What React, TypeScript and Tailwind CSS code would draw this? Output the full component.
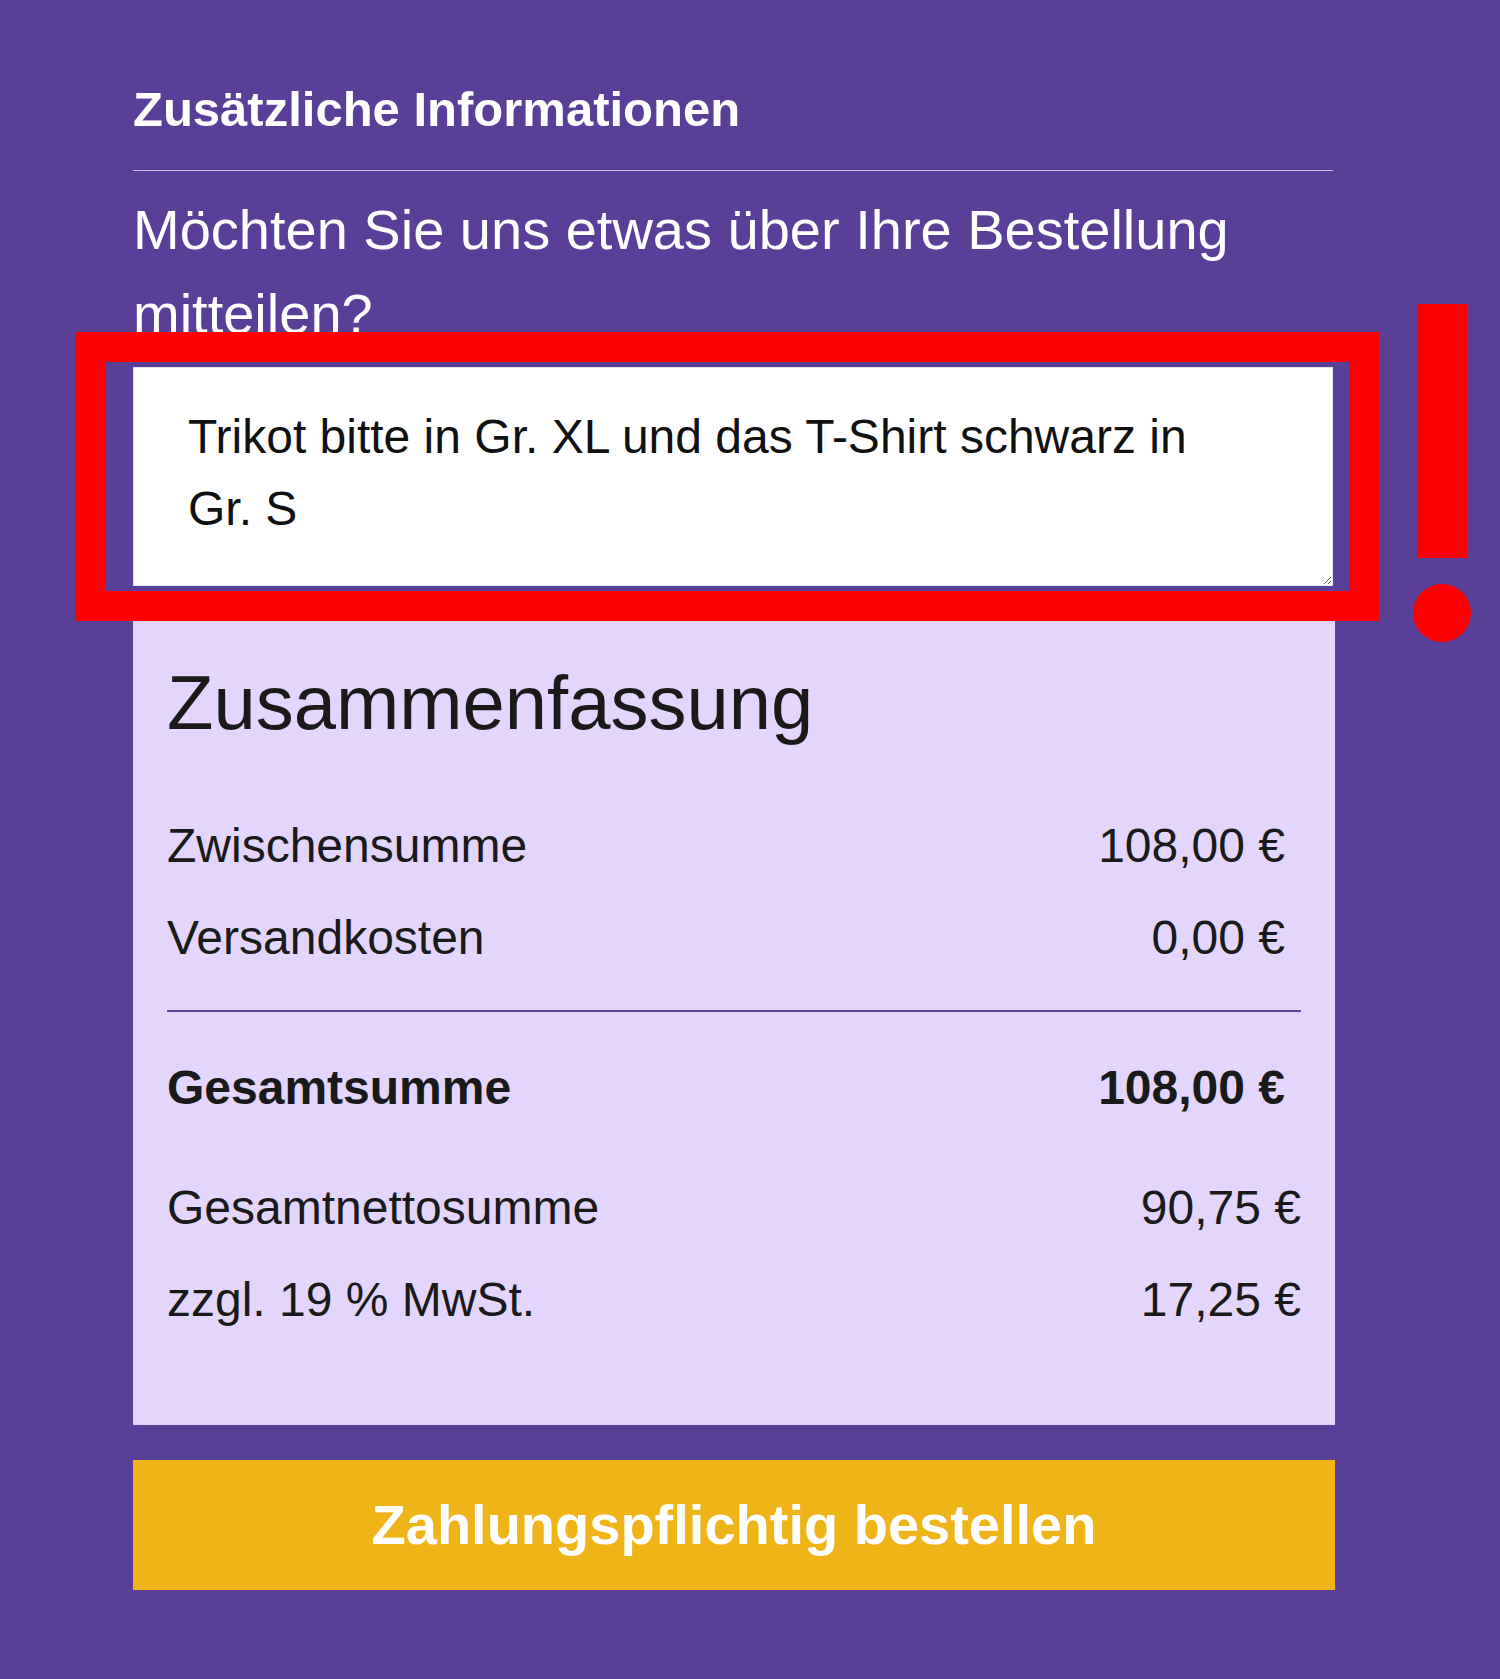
import React from 'react';

const summaryRows = [
  { label: 'Zwischensumme', value: '108,00 €' },
  { label: 'Versandkosten', value: '0,00 €' }
];

const taxRows = [
  { label: 'Gesamtnettosumme', value: '90,75 €' },
  { label: 'zzgl. 19 % MwSt.', value: '17,25 €' }
];

function Row({ label, value, bold = false }: { label: string; value: string; bold?: boolean }) {
  return (
    <div className={`flex items-center justify-between text-[48px] leading-[72px] ${bold ? 'font-bold' : ''}`}>
      <span>{label}</span>
      <span>{value}</span>
    </div>
  );
}

export default function App() {
  return (
    <div className="relative min-h-[1679px] w-full overflow-hidden bg-[#5a3f98] font-[family-name:'Liberation_Sans',Arial,sans-serif]">
      <div className="ml-[133px] w-[1202px] pt-[81px]">
        <h3 className="text-[49px] font-bold leading-[56px] text-white">Zusätzliche Informationen</h3>
        <div className="mt-[33px] h-px w-[1200px] bg-[#cbbfe8]" />
        <p className="mt-[17px] w-[1200px] text-[56px] leading-[84px] text-white">
          Möchten Sie uns etwas über Ihre Bestellung mitteilen?
        </p>

        <textarea
          className="mt-[11px] block h-[219px] w-[1200px] border border-[#e4e4e4] bg-white pt-[33px] pl-[54px] pr-[80px] font-[family-name:'Liberation_Sans',Arial,sans-serif] text-[48px] leading-[72px] text-[#111111] outline-none"
          defaultValue="Trikot bitte in Gr. XL und das T-Shirt schwarz in Gr. S"
        />

        <section className="mt-[35px] bg-[#e3d5fc] px-[34px] pt-[36px] pb-[89px] text-[#1a1a1a]">
          <h2 className="text-[76px] leading-[91px]">Zusammenfassung</h2>
          <div className="mt-[62px] flex flex-col gap-[20px] pr-[16px]">
            {summaryRows.map((row) => (
              <Row key={row.label} label={row.label} value={row.value} />
            ))}
          </div>
          <div className="mt-[36px] h-[2px] bg-[#5d479d]" />
          <div className="mt-[40px] pr-[16px]">
            <Row label="Gesamtsumme" value="108,00 €" bold />
          </div>
          <div className="mt-[48px] flex flex-col gap-[20px]">
            {taxRows.map((row) => (
              <Row key={row.label} label={row.label} value={row.value} />
            ))}
          </div>
        </section>

        <button
          type="button"
          className="mt-[35px] flex h-[130px] w-full items-center justify-center bg-[#efb418] font-[family-name:'Liberation_Sans',Arial,sans-serif] text-[56px] font-bold text-white"
        >
          Zahlungspflichtig bestellen
        </button>
      </div>

      {/* annotation: red frame + exclamation mark */}
      <div className="pointer-events-none absolute left-[75px] top-[332px] h-[289px] w-[1304px] border-[30px] border-[#ff0000]" />
      <div className="pointer-events-none absolute left-[1417px] top-[304px] h-[254px] w-[50px] bg-[#ff0000]" />
      <div className="pointer-events-none absolute left-[1413px] top-[584px] h-[58px] w-[58px] rounded-full bg-[#ff0000]" />
    </div>
  );
}
